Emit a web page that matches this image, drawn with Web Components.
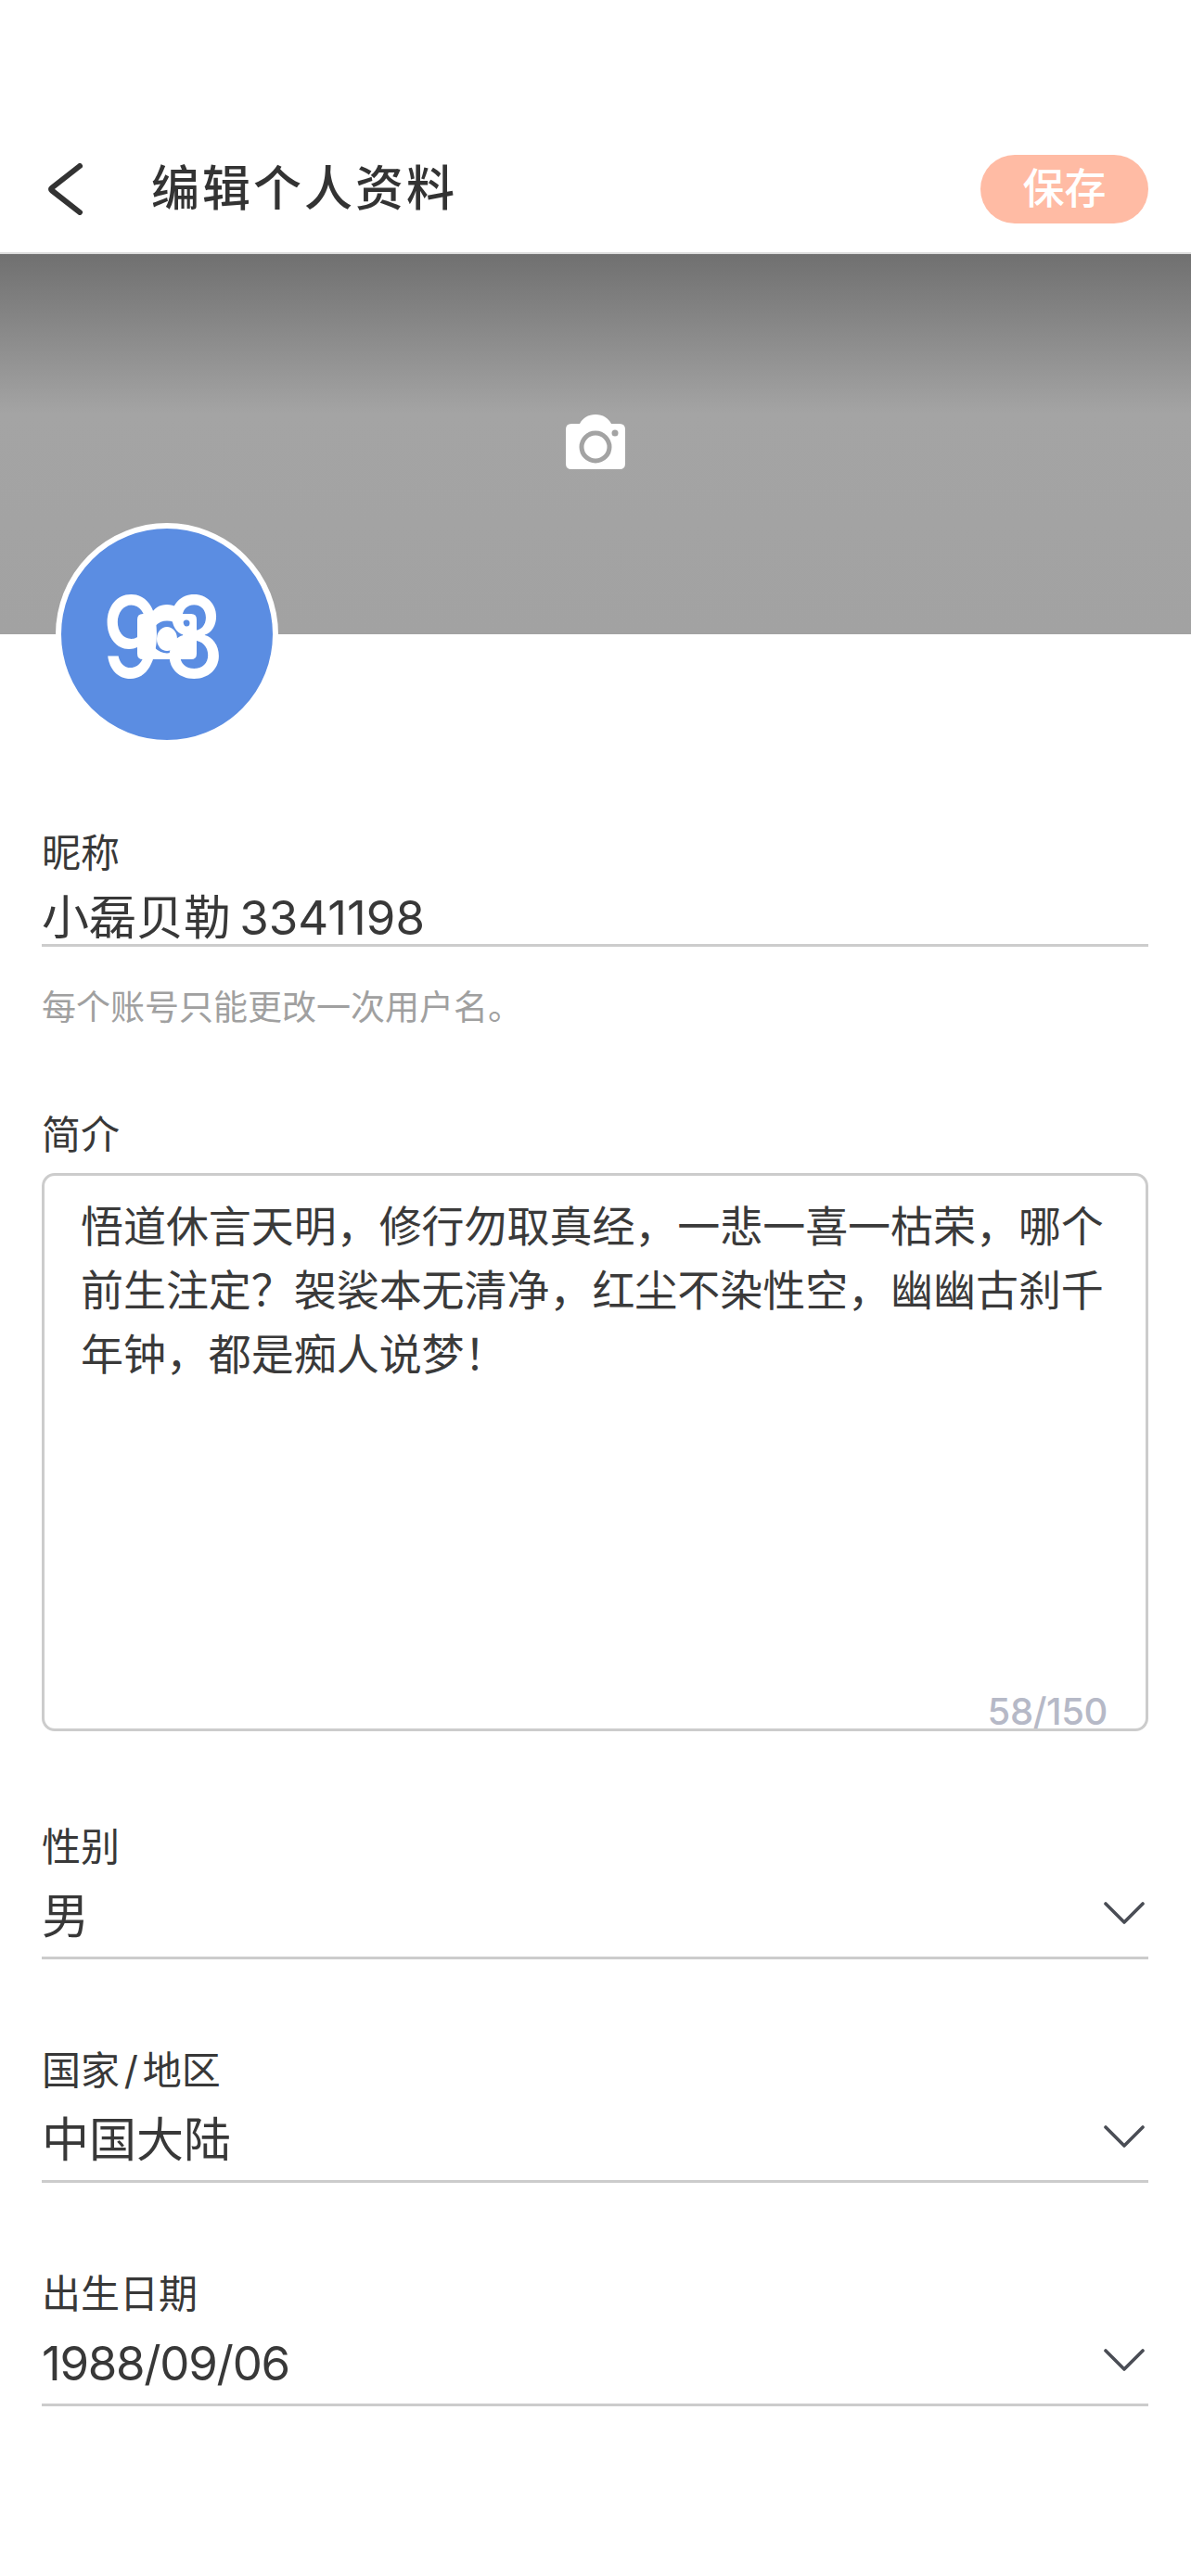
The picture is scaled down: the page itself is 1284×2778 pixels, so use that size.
<!DOCTYPE html>
<html lang="zh-CN">
<head>
<meta charset="utf-8">
<title>编辑个人资料</title>
<style>
html,body{margin:0;padding:0;background:#fff;}
body{width:1284px;height:2778px;overflow:hidden;font-family:Inter,"Noto Sans CJK SC",sans-serif;color:#383838;}
</style>
</head>
<body>
<edit-profile></edit-profile>

<script>
function def(name, html){
  customElements.define(name, class extends HTMLElement{
    constructor(){super();this.attachShadow({mode:'open'}).innerHTML=html;}
  });
}
const FONT='Inter,"Noto Sans CJK SC",sans-serif';

def('app-header',`<style>
:host{display:block;box-sizing:border-box;height:274px;padding-top:136px;border-bottom:2px solid #dcdcdc;background:#fff;}
.bar{height:136px;display:flex;align-items:center;padding:0 46px 0 50px;}
svg{display:block;flex:none;}
h1{margin:0 0 0 72px;flex:1;font:500 52px/1 ${FONT};color:#333;letter-spacing:3px;}
.save{width:181px;height:74px;border-radius:37px;background:#ffbba4;color:#fff;font:500 45px/74px ${FONT};text-align:center;}
</style>
<div class="bar">
<svg width="41" height="56" viewBox="0 0 41 56"><path d="M36 3 L6 26.5 Q4 28 6 29.5 L36 53" fill="none" stroke="#333" stroke-width="6" stroke-linecap="round" stroke-linejoin="round"/></svg>
<h1><slot></slot></h1>
<div class="save"><slot name="action"></slot></div>
</div>`);

def('camera-icon',`<style>
:host{display:block;width:64px;height:59px;}
svg{display:block;}
</style>
<svg width="64" height="59" viewBox="0 0 64 59">
<path fill="#fff" d="M6 10H15C18 4 24 0 32 0C40 0 46 4 49 10H58Q64 10 64 16V53Q64 59 58 59H6Q0 59 0 53V16Q0 10 6 10Z"/>
<circle cx="32" cy="35" r="15" fill="var(--ring-fill,none)" stroke="var(--ring,#a3a3a3)" stroke-width="5"/>
<circle cx="53" cy="20" r="3.5" fill="var(--ring,#a3a3a3)"/>
</svg>`);

def('user-avatar',`<style>
:host{display:block;position:absolute;left:60px;bottom:-120px;width:240px;height:240px;box-sizing:border-box;border:6px solid #fff;border-radius:50%;background:#5b8de2;overflow:hidden;}
.stack{position:relative;width:100%;height:100%;}
camera-icon{position:absolute;left:82px;top:82px;--ring:#5b8de2;--ring-fill:#5b8de2;}
.dot{position:absolute;left:103px;top:106px;width:22px;height:26px;border-radius:50%;background:#fff;}
.d{position:absolute;top:44px;font:500 122px/146px ${FONT};color:#fff;transform:scaleX(.84);transform-origin:left top;}
.a{left:44px;}
.b{left:111px;}
</style>
<div class="stack">
<camera-icon></camera-icon>
<div class="dot"></div>
<span class="d a">9</span><span class="d b">8</span>
</div>`);

def('cover-banner',`<style>
:host{display:flex;position:relative;box-sizing:border-box;height:410px;padding-bottom:5px;align-items:center;justify-content:center;background:linear-gradient(#707070 0,#a4a4a4 42%,#a2a2a2 100%);}
</style>
<slot></slot>`);

def('field-label',`<style>
:host{display:block;font:400 42px/50px ${FONT};color:#383838;height:50px;white-space:nowrap;word-spacing:-7px;}
</style><slot></slot>`);

def('text-field',`<style>
:host{display:block;}
.v{margin-top:17px;height:56px;font:400 51px/56px ${FONT};color:#383838;border-bottom:3px solid #ccc;white-space:nowrap;word-spacing:-5px;}
.h{margin-top:41px;font:400 37px/50px ${FONT};color:#a0a0a0;height:50px;}
</style>
<field-label><slot name="label"></slot></field-label>
<div class="v"><slot></slot></div>
<div class="h"><slot name="hint"></slot></div>`);

def('bio-box',`<style>
:host{display:block;}
.box{margin-top:16px;box-sizing:border-box;height:602px;border:3px solid #ccc;border-radius:14px;padding:20px 41px 0 39px;display:flex;flex-direction:column;}
.t{font:400 46px/69px ${FONT};color:#3a3a3a;letter-spacing:-.05px;}
.c{margin-top:auto;margin-bottom:-2px;align-self:flex-end;font:500 40px/40px ${FONT};color:#b6b9c7;letter-spacing:-.4px;}
</style>
<field-label><slot name="label"></slot></field-label>
<div class="box"><div class="t"><slot></slot></div><div class="c"><slot name="count"></slot></div></div>`);

def('select-field',`<style>
:host{display:block;}
.v{margin-top:4px;height:92px;box-sizing:border-box;border-bottom:3px solid #ccc;display:flex;align-items:center;justify-content:space-between;font:400 51px/92px ${FONT};color:#383838;}
.v span{display:block;height:89px;}
svg{display:block;margin:-6px 4px 0 0;}
</style>
<field-label><slot name="label"></slot></field-label>
<div class="v"><span><slot></slot></span>
<svg width="44" height="24" viewBox="0 0 44 24"><path d="M2 2 L22 22 L42 2" fill="none" stroke="#4a4d55" stroke-width="3.6" stroke-linecap="round" stroke-linejoin="round"/></svg></div>`);

def('edit-profile',`<style>
:host{display:block;width:1284px;}
.form{padding:211px 46px 0 45px;}
bio-box{margin-top:87px;}
.s1{margin-top:100px;}
.s2{margin-top:95px;}
</style>
<app-header>编辑个人资料<span slot="action">保存</span></app-header>
<cover-banner><camera-icon></camera-icon><user-avatar></user-avatar></cover-banner>
<div class="form">
<text-field><span slot="label">昵称</span>小磊贝勒 3341198<span slot="hint">每个账号只能更改一次用户名。</span></text-field>
<bio-box><span slot="label">简介</span>悟道休言天明，修行勿取真经，一悲一喜一枯荣，哪个前生注定？袈裟本无清净，红尘不染性空，幽幽古刹千年钟，都是痴人说梦！<span slot="count">58/150</span></bio-box>
<select-field class="s1"><span slot="label">性别</span>男</select-field>
<select-field class="s2"><span slot="label">国家 / 地区</span>中国大陆</select-field>
<select-field class="s2"><span slot="label">出生日期</span><span style="letter-spacing:-1.3px">1988/09/06</span></select-field>
</div>`);
</script>
</body>
</html>
